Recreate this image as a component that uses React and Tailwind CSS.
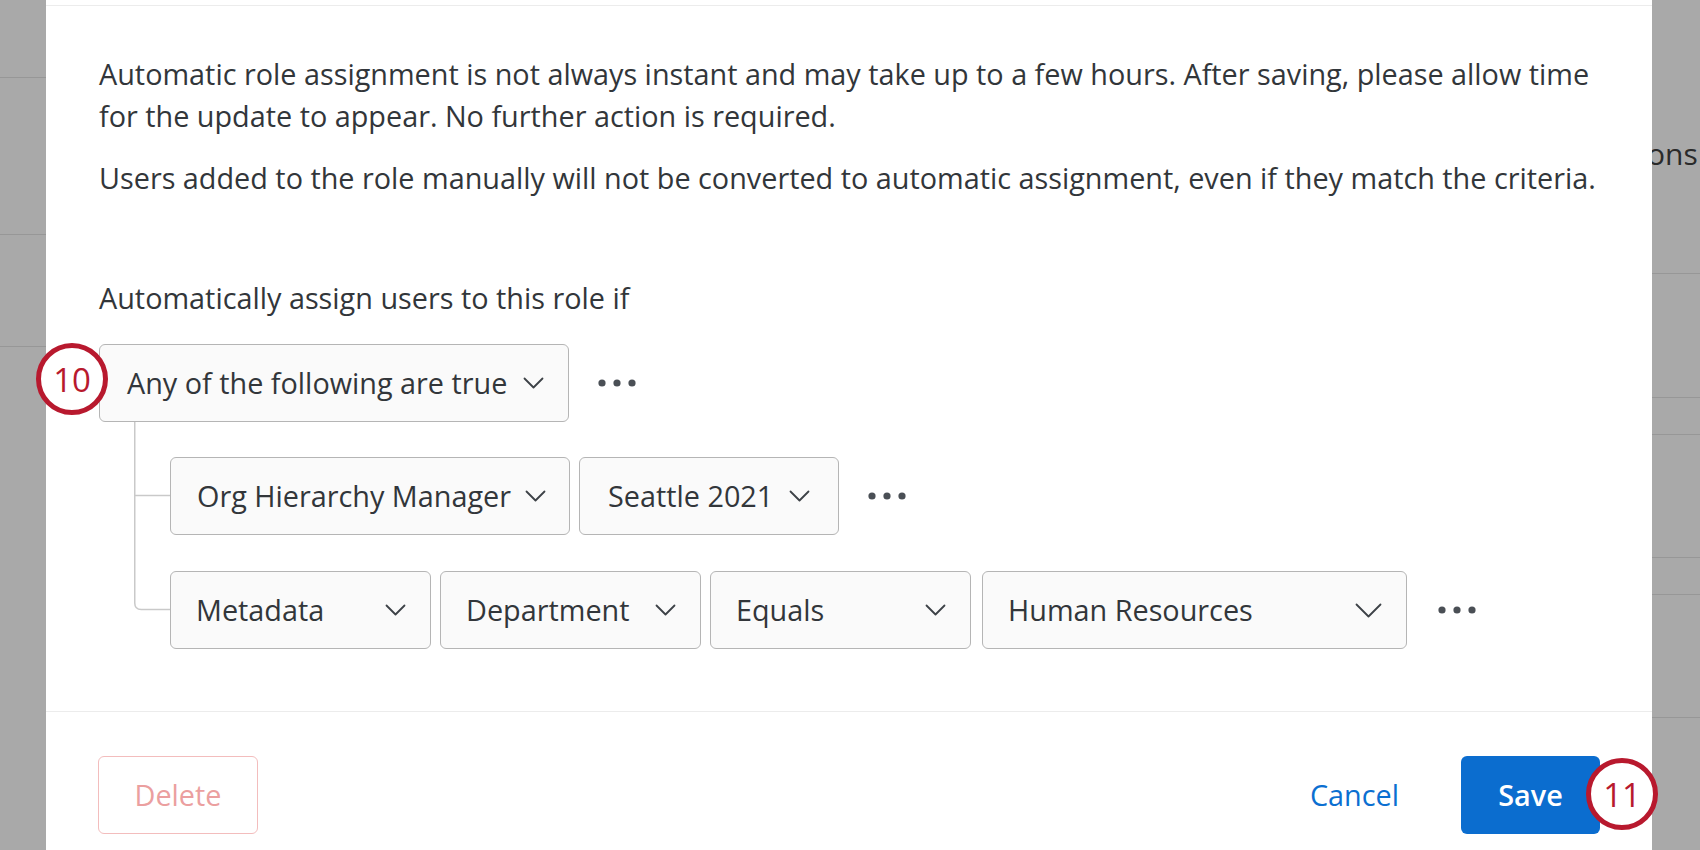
import React from 'react';

const Chevron = ({ big }) => (
  <svg
    width={big ? 27 : 21}
    height={big ? 15 : 12}
    viewBox={big ? '0 0 27 15' : '0 0 21 12'}
    fill="none"
    stroke="#3d4247"
    strokeWidth="1.8"
    strokeLinecap="round"
    strokeLinejoin="round"
  >
    {big ? <path d="M1.5 1.5l12 12 12-12" /> : <path d="M1.5 1.5l9 9 9-9" />}
  </svg>
);

const Dots = () => (
  <svg width="38" height="8" viewBox="0 0 38 8" fill="#4a4f55">
    <circle cx="4" cy="4" r="3.6" />
    <circle cx="19" cy="4" r="3.6" />
    <circle cx="34" cy="4" r="3.6" />
  </svg>
);

// auto-width select (text then chevron)
const Select = ({ label, className = 'gap-[16px] pl-[27px] pr-[24px]' }) => (
  <div
    className={`flex h-[78px] items-center rounded-[6px] border border-[#b5b5b5] bg-[#fafafa] ${className}`}
  >
    <span className="whitespace-nowrap">{label}</span>
    <Chevron />
  </div>
);

// fixed-width select (text left, chevron right)
const WideSelect = ({ label, width, big }) => (
  <div
    className={`flex h-[78px] items-center justify-between rounded-[6px] border border-[#b5b5b5] bg-[#fafafa] pl-[25px] pr-[24px] ${width}`}
  >
    <span className="whitespace-nowrap">{label}</span>
    <Chevron big={big} />
  </div>
);

const Badge = ({ n, className }) => (
  <div
    className={`absolute flex h-[72px] w-[72px] items-center justify-center rounded-full border-[5px] border-[#b8192e] bg-white text-[33px] leading-none text-[#b8192e] ${className}`}
  >
    {n}
  </div>
);

export default function App() {
  return (
    <div className="relative flex h-[850px] w-[1700px] overflow-hidden bg-[#a9a9a9] font-['Open_Sans',sans-serif] text-[#32363a]">
      {/* page behind the overlay, left side */}
      <div className="flex w-[46px] shrink-0 flex-col">
        <div className="h-[78px] border-b border-[#979797]" />
        <div className="h-[157px] border-b border-[#979797]" />
        <div className="h-[112px] border-b border-[#979797]" />
      </div>

      {/* modal */}
      <div className="flex w-[1606px] shrink-0 flex-col bg-white">
        <div className="h-[6px] border-b border-[#ececec]" />

        <div className="pb-[62px] pl-[53px] pr-[20px] pt-[47px] text-[28.8px] leading-[40px]">
          <p className="whitespace-nowrap leading-[42px]">
            Automatic role assignment is not always instant and may take up to a few hours. After saving, please allow time
            <br />
            for the update to appear. No further action is required.
          </p>
          <p className="mt-[21px] whitespace-nowrap">
            Users added to the role manually will not be converted to automatic assignment, even if they match the criteria.
          </p>

          <p className="mt-[80px]">Automatically assign users to this role if</p>

          <div className="mt-[26px] flex items-center">
            <Select label="Any of the following are true" />
            <div className="ml-[29px]">
              <Dots />
            </div>
          </div>

          <div className="flex">
            <svg width="36" height="225" viewBox="0 0 36 225" fill="none" stroke="#c9c9c9" strokeWidth="1.5" className="ml-[35px] shrink-0">
              <path d="M0.75 0V181q0 6.5 6.5 6.5H36" />
              <path d="M0.75 73.5H36" />
            </svg>
            <div className="flex flex-col gap-[36px] pt-[35px]">
              <div className="flex items-center">
                <Select label="Org Hierarchy Manager" className="gap-[14px] pl-[26px] pr-[23px]" />
                <Select label="Seattle 2021" className="ml-[9px] gap-[16px] pl-[28px] pr-[28px]" />
                <div className="ml-[29px]">
                  <Dots />
                </div>
              </div>
              <div className="flex items-center gap-[9px]">
                <WideSelect label="Metadata" width="w-[261px]" />
                <WideSelect label="Department" width="w-[261px]" />
                <WideSelect label="Equals" width="w-[261px]" />
                <div className="ml-[2px]">
                  <WideSelect label="Human Resources" width="w-[425px]" big />
                </div>
                <div className="ml-[22px]">
                  <Dots />
                </div>
              </div>
            </div>
          </div>
        </div>

        <div className="flex items-center justify-between border-t border-[#ececec] px-[52px] pt-[44px] text-[28.8px]">
          <button className="flex h-[78px] w-[160px] items-center justify-center rounded-[6px] border border-[#f3bdbd] text-[#eb9f9f]">
            Delete
          </button>
          <div className="flex items-center">
            <button className="mr-[62px] text-[#0b6fd1]">Cancel</button>
            <button className="flex h-[78px] w-[139px] items-center justify-center rounded-[6px] bg-[#0b6dcf] font-semibold text-white">
              Save
            </button>
          </div>
        </div>
      </div>

      {/* page behind the overlay, right side */}
      <div className="flex min-w-0 flex-1 flex-col overflow-hidden">
        <div className="h-[274px] border-b border-[#979797] pt-[134px]">
          <div className="-ml-[5px] whitespace-nowrap text-[30px] leading-[40px] text-[#2a2a2a]">ons</div>
        </div>
        <div className="h-[124px] border-b border-[#979797]" />
        <div className="h-[37px] border-b border-[#979797]" />
        <div className="h-[123px] border-b border-[#979797]" />
        <div className="h-[37px] border-b border-[#979797]" />
        <div className="h-[123px] border-b border-[#979797]" />
      </div>

      <Badge n="10" className="left-[36px] top-[343px]" />
      <Badge n="11" className="left-[1586px] top-[758px]" />
    </div>
  );
}
